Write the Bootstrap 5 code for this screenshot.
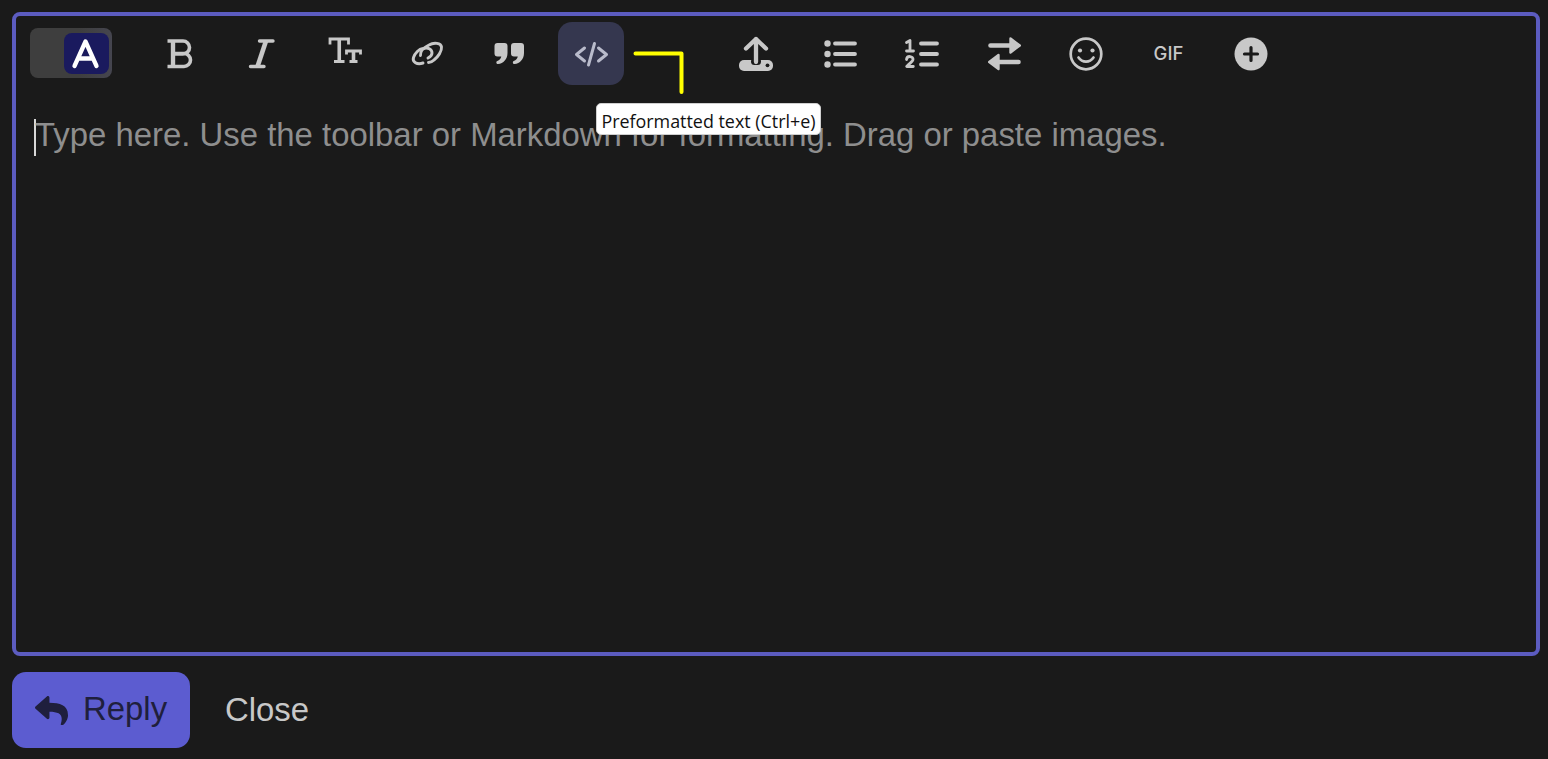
<!doctype html>
<html lang="en">
<head>
<meta charset="utf-8">
<title>Composer</title>
<link href="https://cdn.jsdelivr.net/npm/bootstrap@5.3.0/dist/css/bootstrap.min.css" rel="stylesheet">
<style>
html,body{height:100%;overflow:hidden}
body{background:#1a1a1a;font-family:"Liberation Sans",Arial,sans-serif;color:#c8c8c8}
.page-wrap{padding:12px 8px 11px 12px;height:759px}
.editor-box{height:644px;border:4px solid #5c5cc0;border-radius:8px}
.tool-row{padding:6px 0 0 14px;height:69px}
.mode-toggle{width:82px;height:50px;margin:6px 33.5px 0 0;border-radius:8px;padding:5px 3px 4px 34px;background:linear-gradient(90deg,#3e3e3e 60%,#45454f)}
.mode-face{width:45px;height:41px;background:#1a1a5e;border-radius:8px}
.tool-btn{width:66px;height:63px;padding:0;border:0;border-radius:14px;background:transparent;color:#c8c8c8;margin-right:16.5px}
.tool-btn svg{display:block;margin:auto;overflow:visible}
.tool-btn.is-hover{background:#35374f;color:#b9bbcb;margin-right:99px}
.gif-label{font:500 18.5px/1 Inter,sans-serif}
.hint-row{padding:34px 0 0 18px;font-size:32.9px;line-height:37px;color:#8e8e8e;height:100px}
.caret-bar{width:2px;height:37px;background:#d8d8d8;margin-right:-1px;flex:none}
.hint-text{margin-top:-3px}
.tip-box{left:596px;top:103px;width:225px;height:32px;background:#fff;color:#111;border:1px solid #cfcfcf;border-radius:5px;font:17.9px/34px "Open Sans",sans-serif;text-align:center;white-space:nowrap;overflow:hidden}
.marker-line{left:630px;top:48px}
.foot-row{margin-top:16px}
.reply-btn{width:178px;height:76px;background:#5c5cd0;border:0;border-radius:14px;color:#1f1f3d;font-size:32.9px;line-height:1;padding:0 0 0 23px;gap:15px}
.reply-btn:hover,.reply-btn:active{background:#5c5cd0!important;color:#1f1f3d!important}
.reply-word{position:relative;top:-1px}
.close-btn{background:transparent;border:0;color:#c8c8c8;font-size:32.9px;line-height:1;padding:0;margin-left:35px}
</style>
</head>
<body>
<div class="page-wrap">
  <div class="editor-box">
    <div class="tool-row d-flex align-items-start">
      <div class="mode-toggle flex-shrink-0 d-flex">
        <div class="mode-face d-flex align-items-center justify-content-center">
          <svg width="45" height="41" viewBox="0 0 45 41" fill="none" stroke="#fff" stroke-width="4.300" stroke-linecap="round" stroke-linejoin="round"><path d="M10.500 33 21.500 8.500 32.500 33M14.500 25.500h14"/></svg>
        </div>
      </div>
      <button class="tool-btn flex-shrink-0" aria-label="Bold"><svg width="36" height="36" viewBox="0 0 36 36" fill="none" stroke="currentColor" stroke-width="3.600"><path d="M6.500 5H22a6.500 6.500 0 0 1 0 13H11M11 17.500h12a6.500 6.500 0 0 1 0 13H6.500"/><path d="M12 5v25.500" stroke-width="4.400"/></svg></button>
      <button class="tool-btn flex-shrink-0" aria-label="Italic"><svg width="36" height="36" viewBox="0 0 36 36" fill="none" stroke="currentColor" stroke-width="3.400" stroke-linecap="round"><path d="M16.500 5h13.500M7.500 30.500H21"/><path d="M23 5l-8.500 25.500" stroke-width="4.600" stroke-linecap="butt"/></svg></button>
      <button class="tool-btn flex-shrink-0" aria-label="Heading"><svg width="36" height="36" viewBox="0 0 36 36" fill="none" stroke="currentColor" stroke-width="2.800"><path d="M4 8.500V3h18.500v5.500M8 25.500h10.500M20.500 18.500V15h14v3.500M23.500 25.500h8"/><path d="M13.250 3v22.500M27.500 15v10.500" stroke-width="3.600"/></svg></button>
      <button class="tool-btn flex-shrink-0" aria-label="Link"><svg width="36" height="36" viewBox="0 0 36 36" fill="none" stroke="currentColor" stroke-width="2.900" stroke-linecap="round"><path d="M15 27C9 29 4 26 5.500 21.500 7 17 11 13 15 12.500 20 11 24 13 24 17c0 2-2 4-4 5"/><path d="M12.500 19.500C12 15 17 11 21 9c5-3 12-2 12.500 2 .5 4-3.500 10-7.500 13-2 2-4 2.500-5.500 2.500"/></svg></button>
      <button class="tool-btn flex-shrink-0" aria-label="Quote"><svg width="36" height="36" viewBox="0 0 36 36" fill="currentColor"><path id="qt" d="M6.500 7h7a3 3 0 0 1 3 3v7c0 6-4 10.500-9.500 11-1.700.1-2.300-2.200-.7-3 2.200-1 3.500-2.500 4-4.500H6.500a3 3 0 0 1-3-3v-7.500a3 3 0 0 1 3-3z"/><use href="#qt" x="16.500"/></svg></button>
      <button class="tool-btn is-hover flex-shrink-0" aria-label="Preformatted text"><svg width="36" height="36" viewBox="0 0 36 36" fill="none" stroke="currentColor" stroke-width="3" stroke-linecap="round" stroke-linejoin="round"><path d="M11.500 12 3.500 18.500l8 6.500M25.500 12l8 6.500-8 6.500M21.500 7.500 15.500 29"/></svg></button>
      <button class="tool-btn flex-shrink-0" aria-label="Upload"><svg width="36" height="36" viewBox="0 0 36 36" fill="none" stroke-linecap="round" stroke-linejoin="round"><rect x="1" y="24" width="34" height="11" rx="5" fill="#c8c8c8"/><rect x="13" y="22" width="10" height="7" rx="3.500" fill="#1a1a1a"/><circle cx="29.500" cy="29.300" r="1.900" fill="#1a1a1a"/><path d="M8 12.500 18 3l10 9.500M18 3v23" stroke="#c8c8c8" stroke-width="4.300"/></svg></button>
      <button class="tool-btn flex-shrink-0" aria-label="Bulleted list"><svg width="36" height="36" viewBox="0 0 36 36" fill="currentColor"><circle cx="6.500" cy="7.500" r="3.200"/><circle cx="6.500" cy="18" r="3.200"/><circle cx="6.500" cy="28.500" r="3.200"/><path d="M14 7.500h20M14 18h20M14 28.500h20" stroke="currentColor" stroke-width="3.800" stroke-linecap="round"/></svg></button>
      <button class="tool-btn flex-shrink-0" aria-label="Numbered list"><svg width="36" height="36" viewBox="0 0 36 36" fill="none" stroke="currentColor" stroke-linecap="round" stroke-linejoin="round"><path d="M18 7.500h16M18 18h16M18 28.500h16" stroke-width="3.800"/><path d="M3.500 6.500 7 4.500v10.500M3.500 15h7M3.500 23.500c.5-4.500 7-3.500 6.500.2-.3 2-3 3-6.300 6.800h6.600" stroke-width="2.800"/></svg></button>
      <button class="tool-btn flex-shrink-0" aria-label="Hide preview"><svg width="36" height="36" viewBox="0 0 36 36" fill="currentColor" stroke="currentColor" stroke-linejoin="round"><path d="M4.500 9.500H26M32.500 26H11" stroke-width="4.600" stroke-linecap="round"/><path d="M24.500 2.500 33.800 9.500 24.500 16.500zM12.500 19 3.200 26l9.300 7z" stroke-width="2.400"/></svg></button>
      <button class="tool-btn flex-shrink-0" aria-label="Emoji"><svg width="36" height="36" viewBox="0 0 36 36" fill="none" stroke="currentColor" stroke-width="2.700" stroke-linecap="round"><circle cx="18" cy="18" r="15.300"/><circle cx="12" cy="14.500" r="2.100" fill="currentColor" stroke="none"/><circle cx="24.500" cy="14.500" r="2.100" fill="currentColor" stroke="none"/><path d="M10.500 21.500c3.800 5.500 11.200 5.500 15 0"/></svg></button>
      <button class="tool-btn gif-label flex-shrink-0">GIF</button>
      <button class="tool-btn flex-shrink-0" aria-label="More"><svg width="36" height="36" viewBox="0 0 36 36"><circle cx="18" cy="18" r="16.500" fill="currentColor"/><path d="M18 11.500v13M11.500 18h13" stroke="#1a1a1a" stroke-width="3.200" stroke-linecap="round"/></svg></button>
    </div>
    <div class="hint-row d-flex"><span class="caret-bar"></span><span class="hint-text">Type here. Use the toolbar or Markdown for formatting. Drag or paste images.</span></div>
  </div>
  <div class="foot-row d-flex align-items-center">
    <button class="btn reply-btn d-flex align-items-center"><svg width="33" height="29" viewBox="0 0 512 440" fill="currentColor" preserveAspectRatio="none"><path transform="translate(0 -32)" d="M8.309 189.836L184.313 37.851C199.719 24.546 224 35.347 224 56.015v80.053c160.629 1.839 288 34.032 288 186.258 0 61.441-39.581 122.309-83.333 154.132-13.653 9.931-33.111-2.533-28.077-18.631 45.344-145.012-21.507-183.51-176.59-185.742V360c0 20.7-24.3 31.453-39.687 18.164l-176.004-152c-11.071-9.562-11.086-26.753 0-36.328z"/></svg><span class="reply-word">Reply</span></button>
    <button class="btn close-btn">Close</button>
  </div>
</div>
<div class="tip-box position-absolute">Preformatted text (Ctrl+e)</div>
<svg class="marker-line position-absolute" width="60" height="50" viewBox="0 0 60 50" fill="none"><path d="M5.500 5.500H51.500V44" stroke="#ffff00" stroke-width="4" stroke-linecap="round" stroke-linejoin="round"/></svg>
</body>
</html>
